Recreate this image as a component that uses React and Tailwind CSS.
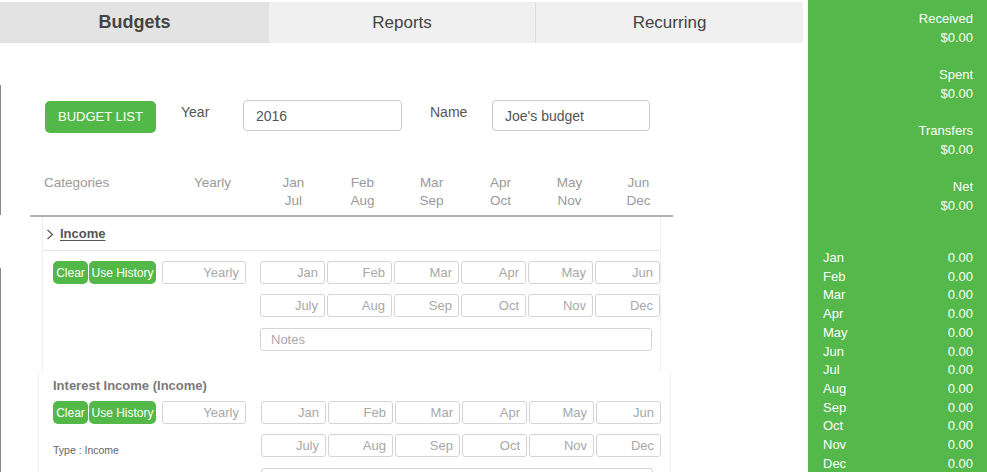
import React from 'react';

const months1 = ['Jan', 'Feb', 'Mar', 'Apr', 'May', 'Jun'];
const months2 = ['July', 'Aug', 'Sep', 'Oct', 'Nov', 'Dec'];
const headTop = ['Jan', 'Feb', 'Mar', 'Apr', 'May', 'Jun'];
const headBottom = ['Jul', 'Aug', 'Sep', 'Oct', 'Nov', 'Dec'];
const sideMonths = ['Jan', 'Feb', 'Mar', 'Apr', 'May', 'Jun', 'Jul', 'Aug', 'Sep', 'Oct', 'Nov', 'Dec'];
const totals = ['Received', 'Spent', 'Transfers', 'Net'];

const SmallInput = ({ placeholder, width = 'w-[65px]' }) => (
  <input
    readOnly
    placeholder={placeholder}
    className={`${width} h-[23px] border border-[#d4d4d4] rounded-[3px] bg-white text-right pr-[6px] text-[13px] outline-none placeholder:text-[#a8a8a8]`}
  />
);

const ActionButtons = () => (
  <div className="flex items-center">
    <button className="h-[23px] w-[35px] rounded-[5px] bg-[#52b848] text-white text-[12px] leading-none whitespace-nowrap">Clear</button>
    <button className="ml-[1px] h-[23px] w-[67px] rounded-[5px] bg-[#52b848] text-white text-[12px] leading-none whitespace-nowrap">Use History</button>
    <div className="ml-[6px] flex">
      <SmallInput placeholder="Yearly" width="w-[84px]" />
    </div>
  </div>
);

const MonthGrid = () => (
  <div className="flex flex-col gap-[10px]">
    <div className="flex gap-[2px]">
      {months1.map((m) => <SmallInput key={m} placeholder={m} />)}
    </div>
    <div className="flex gap-[2px]">
      {months2.map((m) => <SmallInput key={m} placeholder={m} />)}
    </div>
    <input
      readOnly
      placeholder="Notes"
      className="mt-[1px] w-[392px] h-[23px] border border-[#d4d4d4] rounded-[3px] bg-white pl-[10px] text-[13px] outline-none placeholder:text-[#a8a8a8]"
    />
  </div>
);

export default function App() {
  return (
    <div className="flex w-[987px] h-[472px] overflow-hidden bg-white font-['Liberation_Sans',Arial,sans-serif]">
      {/* Main area */}
      <div className="w-[808px] flex flex-col">
        {/* Tabs */}
        <div className="mt-[2px] w-[803px] h-[41px] flex text-[#444]">
          <div className="w-[269px] bg-[#e3e3e3] flex items-center justify-center font-bold text-[18px]">Budgets</div>
          <div className="w-[267px] bg-[#f0f0f0] flex items-center justify-center border-r border-[#dcdcdc] text-[17px]">Reports</div>
          <div className="flex-1 bg-[#f0f0f0] flex items-center justify-center text-[17px]">Recurring</div>
        </div>

        <div className="flex flex-1 min-h-0">
          {/* Left rail */}
          <div className="w-px shrink-0 flex flex-col">
            <div className="h-[42px]" />
            <div className="h-[130px] bg-[#8a8a8a]" />
            <div className="h-[53px]" />
            <div className="flex-1 bg-[#8a8a8a]" />
          </div>

          <div className="flex-1 flex flex-col">
            {/* Top form row */}
            <div className="mt-[57px] ml-[44px] flex items-start">
              <button className="mt-[1px] w-[111px] h-[32px] rounded-[5px] bg-[#52b848] text-white text-[13px]">BUDGET LIST</button>
              <div className="ml-[25px] w-[62px] pt-[2px] text-[14px] text-[#555]">Year</div>
              <input
                readOnly
                value="2016"
                className="w-[159px] h-[31px] border border-[#ccc] rounded-[4px] px-[12px] text-[14px] text-[#555] outline-none"
              />
              <div className="ml-[28px] w-[62px] pt-[2px] text-[14px] text-[#555]">Name</div>
              <input
                readOnly
                value="Joe's budget"
                className="w-[158px] h-[31px] border border-[#ccc] rounded-[4px] px-[12px] text-[14px] text-[#555] outline-none"
              />
            </div>

            {/* Column headers */}
            <div className="mt-[41px] h-[36px] flex text-[13.5px] leading-[18px] text-[#9a9a9a]">
              <div className="ml-[43px] w-[150px]">Categories</div>
              <div className="w-[36px] text-right">Yearly</div>
              <div className="ml-[29px] flex">
                {headTop.map((m, i) => (
                  <div key={m} className="w-[69px] text-center">
                    <div>{m}</div>
                    <div>{headBottom[i]}</div>
                  </div>
                ))}
              </div>
            </div>
            <div className="mt-[5px] ml-[29px] w-[643px] h-[2px] shrink-0 bg-[#b0b0b0]" />

            {/* Income section */}
            <div className="ml-[41px] w-[619px] border-l border-r border-[#efefef]">
              <div className="h-[34px] flex items-center border-b border-[#e6e6e6] pl-[3px] pt-[1px] text-[13px] text-[#555]">
                <svg width="8" height="11" viewBox="0 0 8 11">
                  <path d="M1.5 1 L6.5 5.5 L1.5 10" fill="none" stroke="#555" strokeWidth="1.2" />
                </svg>
                <span className="ml-[6px] font-bold underline underline-offset-2">Income</span>
              </div>
              <div className="pt-[10px] pb-[20px] pl-[10px] flex">
                <div className="w-[208px]">
                  <ActionButtons />
                </div>
                <MonthGrid />
              </div>
            </div>

            {/* Interest Income section */}
            <div className="ml-[37px] w-[633px] border-l border-r border-[#efefef] pl-[14px] pt-[7px]">
              <div className="text-[13px] leading-[16px] font-bold text-[#7a7a7a]">Interest Income (Income)</div>
              <div className="mt-[7px] flex">
                <div className="w-[208px] flex flex-col gap-[10px]">
                  <ActionButtons />
                  <div className="h-[23px] flex items-end text-[10.5px] leading-[14px] text-[#666]">Type : Income</div>
                </div>
                <MonthGrid />
              </div>
            </div>
          </div>
        </div>
      </div>

      {/* Summary panel */}
      <div className="flex-1 bg-[#54b84b] text-white text-[13px] flex flex-col">
        <div className="pt-[9px] pr-[14px] flex flex-col gap-[18px] text-right">
          {totals.map((t) => (
            <div key={t} className="leading-[19px]">
              <div>{t}</div>
              <div>$0.00</div>
            </div>
          ))}
        </div>
        <div className="mt-[34px] pl-[15px] pr-[14px]">
          {sideMonths.map((m) => (
            <div key={m} className="flex justify-between leading-[18.7px]">
              <span>{m}</span>
              <span>0.00</span>
            </div>
          ))}
        </div>
      </div>
    </div>
  );
}
